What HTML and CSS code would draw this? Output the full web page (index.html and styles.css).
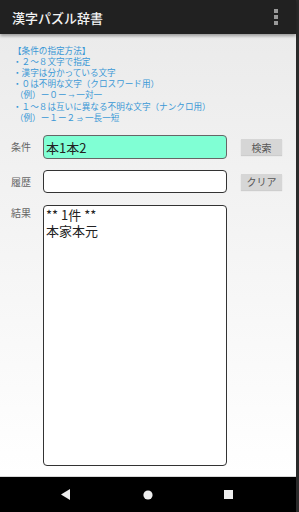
FILE: index.html
```html
<!DOCTYPE html>
<html lang="ja">
<head>
    <meta charset="UTF-8">
    <meta name="viewport" content="width=device-width, initial-scale=1.0">
    <title>漢字パズル辞書</title>
    <link rel="stylesheet" href="styles.css">
</head>
<body>
    <div class="screen">
        <header class="app-bar">
            <h1 class="app-title">漢字パズル辞書</h1>
            <div class="menu-dots">
                <span></span><span></span><span></span>
            </div>
        </header>

        <main class="content">
            <div class="help">
                <div>【条件の指定方法】</div>
                <div>・２～８文字で指定</div>
                <div>・漢字は分かっている文字</div>
                <div>・０は不明な文字（クロスワード用）</div>
                <div>&nbsp;（例）ー０ー <span class="arrow">→</span> 一対一</div>
                <div>・１～８は互いに異なる不明な文字（ナンクロ用）</div>
                <div>&nbsp;（例）ー１ー２ <span class="arrow">⇒</span> 一長一短</div>
            </div>

            <div class="row">
                <label class="row-label" for="cond">条件</label>
                <input class="field field-green" type="text" id="cond" value="本1本2">
                <button class="btn">検索</button>
            </div>

            <div class="row row-history">
                <label class="row-label" for="history">履歴</label>
                <input class="field" type="text" id="history">
                <button class="btn">クリア</button>
            </div>

            <div class="row row-result">
                <label class="row-label" for="result">結果</label>
                <div class="result" id="result">
                    <div class="result-line">** 1件 **</div>
                    <div class="result-line">本家本元</div>
                </div>
            </div>
        </main>

        <nav class="nav-bar">
            <svg width="10" height="11" viewBox="0 0 10 11"><polygon points="9,0 9,11 0,5.5" fill="#eeeeee"/></svg>
            <svg width="10" height="10" viewBox="0 0 10 10"><circle cx="5" cy="5" r="4.6" fill="#eeeeee"/></svg>
            <svg width="9" height="9" viewBox="0 0 9 9"><rect width="9" height="9" fill="#eeeeee"/></svg>
        </nav>
    </div>
</body>
</html>
```

FILE: styles.css
```css
html, body {
    margin: 0;
    padding: 0;
    height: 100%;
}
body {
    font-family: "Noto Sans CJK JP", "Noto Sans", sans-serif;
    background-color: #000;
}
.screen {
    display: flex;
    flex-direction: column;
    height: 100vh;
    border-right: 3px solid #2a2a2a;
    box-sizing: border-box;
}
.app-bar {
    height: 34px;
    flex: none;
    background-color: #212121;
    display: flex;
    align-items: center;
    justify-content: space-between;
    padding: 0 18px 0 12px;
    box-shadow: 0 2px 3px rgba(0,0,0,0.35);
    position: relative;
    z-index: 1;
}
.app-title {
    margin: 0;
    font-size: 13px;
    font-weight: 500;
    color: #f2f2f2;
}
.menu-dots {
    display: flex;
    flex-direction: column;
    gap: 2px;
}
.menu-dots span {
    width: 4px;
    height: 4px;
    background-color: #9a9a9a;
}
.content {
    flex: 1;
    background: linear-gradient(#ebebeb, #ffffff);
    padding: 11px 0 0 0;
    border-bottom: 1px solid #d8d8d8;
}
.help {
    padding-left: 13px;
    font-size: 8.6px;
    line-height: 11px;
    color: #3a98d6;
}
.arrow {
    font-size: 6px;
}
.row {
    display: flex;
    align-items: center;
    margin-top: 11px;
}
.row-history {
    margin-top: 11px;
}
.row-result {
    margin-top: 12px;
    align-items: flex-start;
}
.row-label {
    width: 32px;
    padding-left: 11px;
    font-size: 10px;
    line-height: 12px;
    color: #666;
}
.row-result .row-label {
    padding-top: 2px;
}
.field {
    width: 184px;
    height: 24px;
    box-sizing: border-box;
    border: 1px solid #333;
    border-radius: 4px;
    background-color: #fff;
    font-family: inherit;
    font-size: 13px;
    color: #222;
    padding: 0 2px;
    margin: 0;
}
.field-green {
    background-color: #80ffd4;
    border-color: #666;
}
.row-history .field {
    height: 23px;
}
.btn {
    margin-left: 14px;
    width: 41px;
    height: 16px;
    padding: 0;
    border: none;
    background-color: #d6d6d6;
    color: #555;
    font-family: inherit;
    font-size: 10px;
    box-shadow: 0 1px 1px rgba(0,0,0,0.15);
}
.result {
    width: 184px;
    height: 261px;
    box-sizing: border-box;
    border: 1px solid #333;
    border-radius: 4px;
    background-color: #fff;
    font-size: 13px;
    color: #222;
    padding: 1px 2px;
}
.result-line {
    line-height: 16px;
}
.nav-bar {
    height: 35px;
    flex: none;
    background-color: #000;
    display: flex;
    align-items: center;
    justify-content: space-between;
    padding: 0 63px 0 61px;
}
```
